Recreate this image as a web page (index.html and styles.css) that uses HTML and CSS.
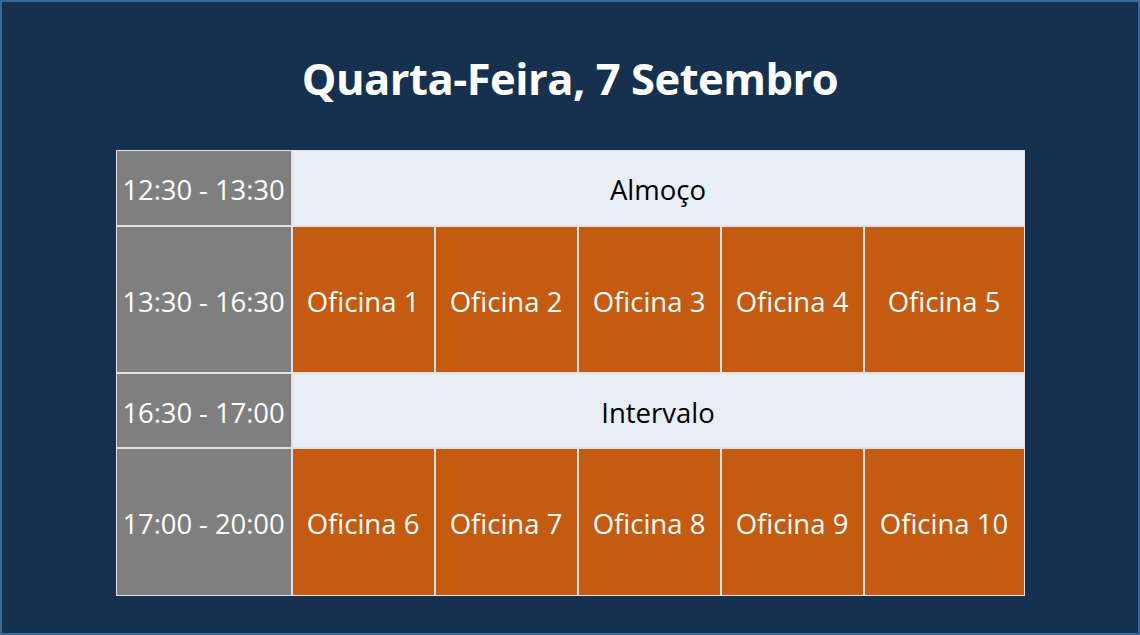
FILE: index.html
```html
<!DOCTYPE html>
<html lang="pt">
<head>
<meta charset="utf-8">
<title>Quarta-Feira, 7 Setembro</title>
<link rel="stylesheet" href="styles.css">
</head>
<body>
<div class="slide">
  <h1 class="title">Quarta-Feira, 7 Setembro</h1>
  <div class="schedule">
    <div class="time">12:30 - 13:30</div>
    <div class="pause">Almoço</div>

    <div class="time">13:30 - 16:30</div>
    <div class="workshop">Oficina 1</div>
    <div class="workshop">Oficina 2</div>
    <div class="workshop">Oficina 3</div>
    <div class="workshop">Oficina 4</div>
    <div class="workshop">Oficina 5</div>

    <div class="time">16:30 - 17:00</div>
    <div class="pause">Intervalo</div>

    <div class="time">17:00 - 20:00</div>
    <div class="workshop">Oficina 6</div>
    <div class="workshop">Oficina 7</div>
    <div class="workshop">Oficina 8</div>
    <div class="workshop">Oficina 9</div>
    <div class="workshop">Oficina 10</div>
  </div>
</div>
</body>
</html>
```

FILE: styles.css
```css
* { box-sizing: border-box; }
html, body { margin: 0; padding: 0; }
body {
  width: 1140px;
  height: 635px;
  overflow: hidden;
  font-family: "Open Sans", "Noto Sans", sans-serif;
}
.slide {
  width: 1140px;
  height: 635px;
  background: #163050;
  border: 2px solid #3a6797;
  display: flex;
  flex-direction: column;
  align-items: center;
}
.title {
  margin: 47px 0 0 0;
  height: 101px;
  color: #ffffff;
  font-weight: 700;
  font-size: 43.5px;
  line-height: 60px;
  letter-spacing: -0.5px;
}
.schedule {
  display: grid;
  grid-template-columns: 174px 141px 141px 141px 141px 159px;
  grid-template-rows: 74px 145px 73px 146px;
  gap: 2px;
  padding: 1px;
  background: #e2e2e2;
}
.time, .pause, .workshop {
  display: flex;
  align-items: center;
  justify-content: center;
  padding-top: 3px;
  font-size: 27.5px;
  white-space: nowrap;
}
.time {
  background: #7f7f7f;
  color: #ffffff;
  letter-spacing: -0.1px;
}
.pause {
  grid-column: 2 / span 5;
  background: #e9edf5;
  color: #000000;
}
.workshop {
  background: #c55a11;
  color: #ffffff;
}
```
